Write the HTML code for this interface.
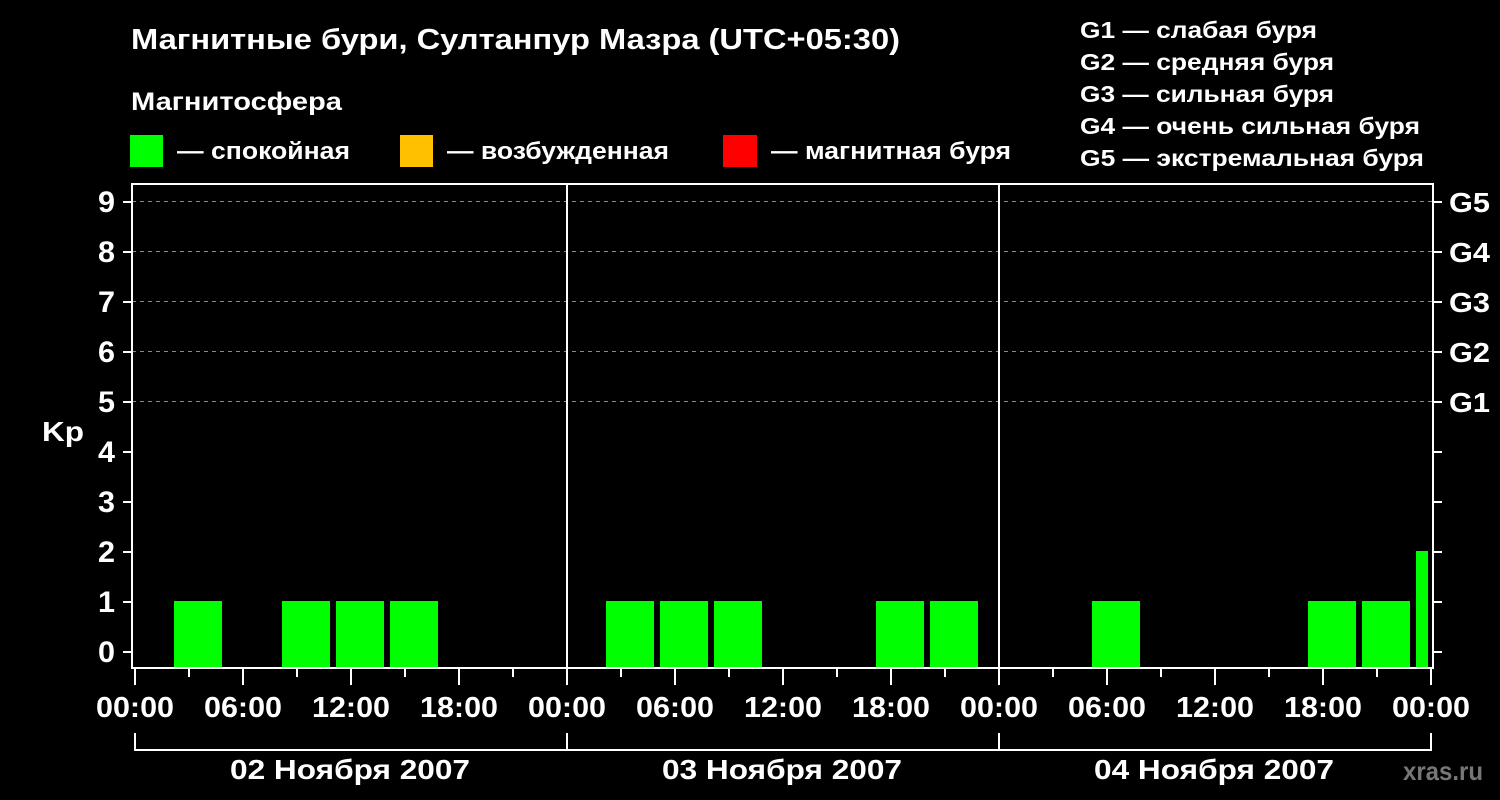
<!DOCTYPE html>
<html><head><meta charset="utf-8"><style>
html,body{margin:0;padding:0;background:#000;}
svg{display:block;font-family:"Liberation Sans",sans-serif;font-weight:bold;}
</style></head><body>
<svg width="1500" height="800" viewBox="0 0 1500 800" xmlns="http://www.w3.org/2000/svg">
<rect width="1500" height="800" fill="#000"/>
<g fill="#fff">
<text x="131" y="49" font-size="29" textLength="769" lengthAdjust="spacingAndGlyphs">Магнитные бури, Султанпур Мазра (UTC+05:30)</text>
<text x="131" y="110" font-size="25" textLength="211" lengthAdjust="spacingAndGlyphs">Магнитосфера</text>
<text x="177" y="159" font-size="24" textLength="173" lengthAdjust="spacingAndGlyphs">— спокойная</text>
<text x="447" y="159" font-size="24" textLength="222" lengthAdjust="spacingAndGlyphs">— возбужденная</text>
<text x="771" y="159" font-size="24" textLength="240" lengthAdjust="spacingAndGlyphs">— магнитная буря</text>
<text x="1080" y="38" font-size="23" textLength="237" lengthAdjust="spacingAndGlyphs">G1 — слабая буря</text>
<text x="1080" y="70" font-size="23" textLength="254" lengthAdjust="spacingAndGlyphs">G2 — средняя буря</text>
<text x="1080" y="102" font-size="23" textLength="254" lengthAdjust="spacingAndGlyphs">G3 — сильная буря</text>
<text x="1080" y="134" font-size="23" textLength="340" lengthAdjust="spacingAndGlyphs">G4 — очень сильная буря</text>
<text x="1080" y="166" font-size="23" textLength="344" lengthAdjust="spacingAndGlyphs">G5 — экстремальная буря</text>
</g>
<rect x="130" y="135" width="33" height="32" fill="#00ff00"/>
<rect x="400" y="135" width="33" height="32" fill="#ffc000"/>
<rect x="723" y="135" width="34" height="32" fill="#ff0000"/>
<g stroke="#888" stroke-dasharray="4,4" stroke-width="1">
<line x1="132" y1="201.5" x2="1432" y2="201.5"/>
<line x1="132" y1="251.5" x2="1432" y2="251.5"/>
<line x1="132" y1="301.5" x2="1432" y2="301.5"/>
<line x1="132" y1="351.5" x2="1432" y2="351.5"/>
<line x1="132" y1="401.5" x2="1432" y2="401.5"/>
</g>
<g fill="#00ff00">
<rect x="174" y="601" width="48" height="67"/>
<rect x="282" y="601" width="48" height="67"/>
<rect x="336" y="601" width="48" height="67"/>
<rect x="390" y="601" width="48" height="67"/>
<rect x="606" y="601" width="48" height="67"/>
<rect x="660" y="601" width="48" height="67"/>
<rect x="714" y="601" width="48" height="67"/>
<rect x="876" y="601" width="48" height="67"/>
<rect x="930" y="601" width="48" height="67"/>
<rect x="1092" y="601" width="48" height="67"/>
<rect x="1308" y="601" width="48" height="67"/>
<rect x="1362" y="601" width="48" height="67"/>
<rect x="1416" y="551" width="12" height="117"/>
</g>
<g stroke="#fff" stroke-width="2" fill="none">
<rect x="132" y="184" width="1301" height="484"/>
<line x1="567" y1="184" x2="567" y2="668"/>
<line x1="999" y1="184" x2="999" y2="668"/>
<path d="M123 202H132M123 252H132M123 302H132M123 352H132M123 402H132M123 452H132M123 502H132M123 552H132M123 602H132M123 652H132"/>
<path d="M1433 202H1442M1433 252H1442M1433 302H1442M1433 352H1442M1433 402H1442M1433 452H1442M1433 502H1442M1433 552H1442M1433 602H1442M1433 652H1442"/>
<path d="M135 669V685M243 669V685M351 669V685M459 669V685M567 669V685M675 669V685M783 669V685M891 669V685M999 669V685M1107 669V685M1215 669V685M1323 669V685M1431 669V685"/>
<path d="M189 669V677M297 669V677M405 669V677M513 669V677M621 669V677M729 669V677M837 669V677M945 669V677M1053 669V677M1161 669V677M1269 669V677M1377 669V677"/>
<path d="M135 733V750H1431V733M567 733V750M999 733V750"/>
</g>
<g fill="#fff" font-size="30">
<text x="98" y="212" textLength="17" lengthAdjust="spacingAndGlyphs">9</text>
<text x="98" y="262" textLength="17" lengthAdjust="spacingAndGlyphs">8</text>
<text x="98" y="312" textLength="17" lengthAdjust="spacingAndGlyphs">7</text>
<text x="98" y="362" textLength="17" lengthAdjust="spacingAndGlyphs">6</text>
<text x="98" y="412" textLength="17" lengthAdjust="spacingAndGlyphs">5</text>
<text x="98" y="462" textLength="17" lengthAdjust="spacingAndGlyphs">4</text>
<text x="98" y="512" textLength="17" lengthAdjust="spacingAndGlyphs">3</text>
<text x="98" y="562" textLength="17" lengthAdjust="spacingAndGlyphs">2</text>
<text x="98" y="612" textLength="17" lengthAdjust="spacingAndGlyphs">1</text>
<text x="98" y="662" textLength="17" lengthAdjust="spacingAndGlyphs">0</text>
</g>
<g fill="#fff" font-size="28">
<text x="42" y="441" textLength="42" lengthAdjust="spacingAndGlyphs">Kp</text>
<text x="1449" y="212" textLength="41" lengthAdjust="spacingAndGlyphs">G5</text>
<text x="1449" y="262" textLength="41" lengthAdjust="spacingAndGlyphs">G4</text>
<text x="1449" y="312" textLength="41" lengthAdjust="spacingAndGlyphs">G3</text>
<text x="1449" y="362" textLength="41" lengthAdjust="spacingAndGlyphs">G2</text>
<text x="1449" y="412" textLength="41" lengthAdjust="spacingAndGlyphs">G1</text>
</g>
<g fill="#fff" font-size="29">
<text x="96" y="717" textLength="78" lengthAdjust="spacingAndGlyphs">00:00</text>
<text x="204" y="717" textLength="78" lengthAdjust="spacingAndGlyphs">06:00</text>
<text x="312" y="717" textLength="78" lengthAdjust="spacingAndGlyphs">12:00</text>
<text x="420" y="717" textLength="78" lengthAdjust="spacingAndGlyphs">18:00</text>
<text x="528" y="717" textLength="78" lengthAdjust="spacingAndGlyphs">00:00</text>
<text x="636" y="717" textLength="78" lengthAdjust="spacingAndGlyphs">06:00</text>
<text x="744" y="717" textLength="78" lengthAdjust="spacingAndGlyphs">12:00</text>
<text x="852" y="717" textLength="78" lengthAdjust="spacingAndGlyphs">18:00</text>
<text x="960" y="717" textLength="78" lengthAdjust="spacingAndGlyphs">00:00</text>
<text x="1068" y="717" textLength="78" lengthAdjust="spacingAndGlyphs">06:00</text>
<text x="1176" y="717" textLength="78" lengthAdjust="spacingAndGlyphs">12:00</text>
<text x="1284" y="717" textLength="78" lengthAdjust="spacingAndGlyphs">18:00</text>
<text x="1392" y="717" textLength="78" lengthAdjust="spacingAndGlyphs">00:00</text>
<text x="230" y="779" font-size="28" textLength="240" lengthAdjust="spacingAndGlyphs">02 Ноября 2007</text>
<text x="662" y="779" font-size="28" textLength="240" lengthAdjust="spacingAndGlyphs">03 Ноября 2007</text>
<text x="1094" y="779" font-size="28" textLength="240" lengthAdjust="spacingAndGlyphs">04 Ноября 2007</text>
</g>
<text x="1403" y="780" fill="#777" font-size="26" textLength="80" lengthAdjust="spacingAndGlyphs">xras.ru</text>
</svg>
</body></html>
